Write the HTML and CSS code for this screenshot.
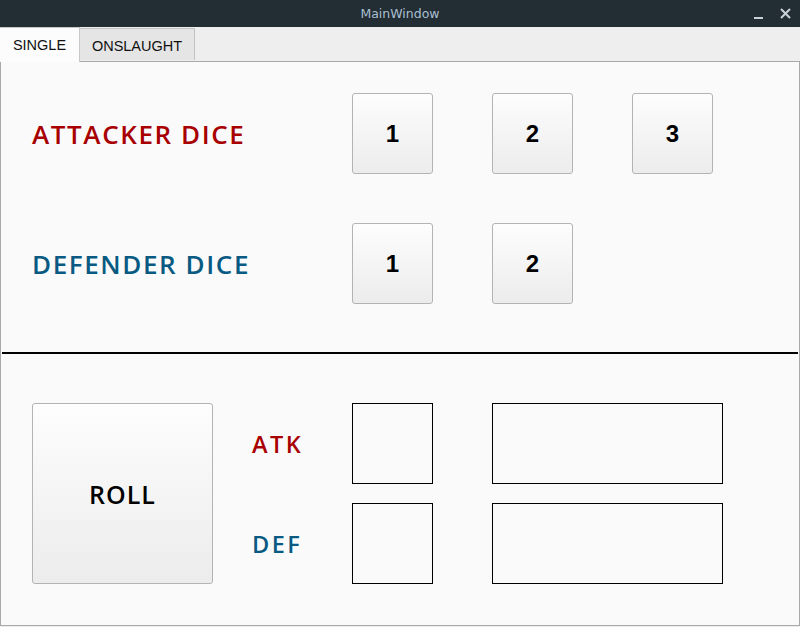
FILE: index.html
```html
<!DOCTYPE html>
<html>
<head>
<meta charset="utf-8">
<link rel="stylesheet" href="styles.css">
</head>
<body>
<div class="window">
  <div class="titlebar">
    <span class="title">MainWindow</span>
    <div class="controls">
      <span class="min"></span>
      <svg class="close" width="11" height="11" viewBox="0 0 11 11"><path d="M1 1 L10 10 M10 1 L1 10" stroke="#c9d1d7" stroke-width="2" fill="none"/></svg>
    </div>
  </div>
  <div class="tabstrip">
    <div class="tab selected">SINGLE</div>
    <div class="tab">ONSLAUGHT</div>
  </div>
  <div class="pane">
    <div class="dice">
      <div class="label atk">ATTACKER DICE</div>
      <button class="die">1</button>
      <button class="die">2</button>
      <button class="die">3</button>
      <div class="label def">DEFENDER DICE</div>
      <button class="die">1</button>
      <button class="die">2</button>
    </div>
    <div class="divider"></div>
    <div class="results">
      <button class="roll">ROLL</button>
      <div class="rlabel atk">ATK</div>
      <div class="box small"></div>
      <div class="box wide"></div>
      <div class="rlabel def">DEF</div>
      <div class="box small"></div>
      <div class="box wide"></div>
    </div>
  </div>
  <div class="footer"></div>
</div>
</body>
</html>
```
FILE: styles.css
```css
* { box-sizing: border-box; }
html, body { margin: 0; padding: 0; }
body { width: 800px; height: 627px; overflow: hidden; background: #eeeeee; }
.window { width: 800px; height: 627px; display: flex; flex-direction: column; }
.titlebar {
  height: 27px; background: #232d34; display: flex; align-items: center; justify-content: center; position: relative;
}
.title { font-family: "DejaVu Sans", sans-serif; font-size: 12.5px; color: #a9bfd2; }
.controls { position: absolute; right: 9px; top: 0; height: 27px; display: flex; align-items: center; gap: 17px; }
.min { width: 9px; height: 2px; background: #c9d1d7; margin-top: 9px; }
.close { display: block; margin-top: -1px; }
.tabstrip { height: 34px; background: #eeeeee; display: flex; align-items: flex-end; position: relative; z-index: 1; }
.tab {
  display: flex; align-items: center; justify-content: center;
  font-family: "Liberation Sans", sans-serif; font-size: 14.5px; color: #111; white-space: nowrap;
  width: 115px; height: 32px; background: #e5e5e5; margin-bottom: 1px;
  border: 1px solid #c2c2c2; border-left: none; border-bottom: none; padding-top: 2px;
}
.tab.selected {
  width: 80px; height: 35px; background: #fcfcfc; margin-bottom: -1px;
  border: 1px solid #c8c8c8; border-left: none; border-bottom: none; padding-top: 0;
}
.pane {
  height: 565px; background: #fafafa; border: 1px solid #a9a9a9; padding: 31px 0 0 31px;
}
.dice {
  display: grid; grid-template-columns: 261px 81px 81px 81px; grid-auto-rows: 81px;
  column-gap: 59px; row-gap: 49px; align-items: center;
}
.label { font-family: "Open Sans", sans-serif; font-size: 26px; letter-spacing: 1.6px; font-weight: 600; }
.atk { color: #a80000; }
.def { color: #085a82; }
.die, .roll {
  border: 1px solid #b3b3b3; border-radius: 3px; background: linear-gradient(#fdfdfd, #ececec);
  color: #000; padding: 0; margin: 0;
}
.die { width: 81px; height: 81px; font-family: "Liberation Sans", sans-serif; font-weight: bold; font-size: 24px; }
.divider { height: 2px; background: #000; margin: 48px 1px 0 -30px; }
.results {
  margin-top: 49px; display: grid; grid-template-columns: 220px 100px 140px 231px;
  grid-template-rows: 81px 81px; row-gap: 19px; align-items: center;
}
.roll { grid-row: 1 / span 2; width: 181px; height: 181px; font-family: "Open Sans", sans-serif; font-size: 25px; letter-spacing: 1px; font-weight: 600; }
.rlabel { font-family: "Open Sans", sans-serif; font-size: 23.5px; letter-spacing: 2.5px; font-weight: 600; }
.box { height: 81px; border: 1px solid #000; }
.box.small { width: 81px; }
.box.wide { width: 231px; }
.footer { flex: 1; }
```
